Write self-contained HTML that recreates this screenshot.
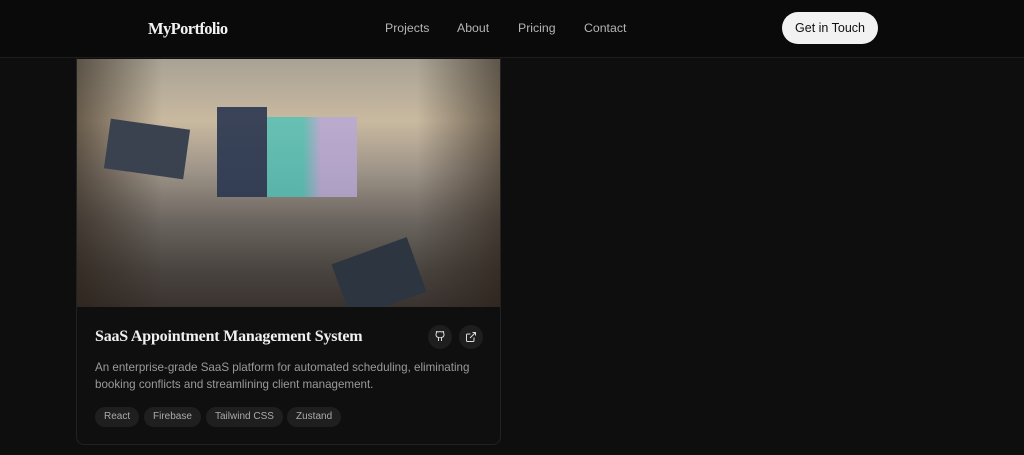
<!DOCTYPE html>
<html><head><style>
*{margin:0;padding:0;box-sizing:border-box}
body{width:1024px;height:455px;background:#0e0e0e;font-family:"Liberation Sans",sans-serif;overflow:hidden;position:relative}
.hdr{position:absolute;left:0;top:0;width:1024px;height:58px;background:#0a0a0a;border-bottom:1px solid #1c1c1c;z-index:5}
.logo{position:absolute;left:148px;top:19px;font-family:"Liberation Serif",serif;font-weight:bold;font-size:16.5px;color:#f2f2f2;letter-spacing:-0.6px}
.nav{position:absolute;top:21px;font-size:12.3px;color:#b5b5b5}
.btn{position:absolute;left:782px;top:12px;width:96px;height:32px;border-radius:16px;background:#f2f2f2;color:#111;font-size:12.5px;text-align:center;line-height:32px}
.card{position:absolute;left:76px;top:40px;width:425px;height:405px;border:1px solid #222;border-radius:8px;background:#0f0f0f;overflow:hidden}
.img{position:absolute;left:0;top:18px;width:425px;height:248px;overflow:hidden;background:
linear-gradient(90deg,rgba(40,30,20,.6) 0%,rgba(0,0,0,0) 20%,rgba(0,0,0,0) 80%,rgba(40,30,20,.6) 100%),
linear-gradient(180deg,#a8a294 0%,#c9b9a0 25%,#9e9488 45%,#6c6660 65%,#4a4440 85%,#3a3330 100%)}
.title{position:absolute;left:18px;top:287px;font-family:"Liberation Serif",serif;font-weight:bold;font-size:16px;color:#f0f0f0;letter-spacing:-0.2px}
.ib{position:absolute;top:284px;width:24px;height:24px;border-radius:12px;background:#1e1e1e}
.desc{position:absolute;left:18px;top:318px;width:380px;font-size:11.6px;line-height:17px;color:#9a9a9a}
.tag{position:absolute;top:366px;height:20px;border-radius:10px;background:#1f1f1f;color:#aaa;font-size:10px;line-height:20px;padding:0 9px}
</style></head><body>
<div class="card">
<div class="img">
<div style="position:absolute;left:140px;top:48px;width:50px;height:90px;background:#2a3650;opacity:.9"></div>
<div style="position:absolute;left:190px;top:58px;width:90px;height:80px;background:linear-gradient(90deg,#4fc1b7 40%,#b7a7d8 60%);opacity:.8"></div>
<div style="position:absolute;left:30px;top:65px;width:80px;height:50px;background:#3a4250;transform:rotate(8deg)"></div>
<div style="position:absolute;left:262px;top:190px;width:80px;height:58px;background:#2d3640;transform:rotate(-20deg)"></div>
</div>
<div class="title">SaaS Appointment Management System</div>
<div class="ib" style="left:351px"></div><div class="ib" style="left:382px"></div>
<svg style="position:absolute;left:357px;top:290px" width="12" height="12" viewBox="0 0 24 24" fill="none" stroke="#ddd" stroke-width="2"><path d="M9 20v-4a4 4 0 0 1 1-3c-3 0-6-1-6-6a5 5 0 0 1 1-3a4 4 0 0 1 0-3s1 0 3 1a12 12 0 0 1 8 0c2-1 3-1 3-1a4 4 0 0 1 0 3a5 5 0 0 1 1 3c0 5-3 6-6 6a4 4 0 0 1 1 3v4"/></svg>
<svg style="position:absolute;left:388px;top:290px" width="12" height="12" viewBox="0 0 24 24" fill="none" stroke="#ddd" stroke-width="2"><path d="M18 13v6a2 2 0 0 1-2 2H5a2 2 0 0 1-2-2V8a2 2 0 0 1 2-2h6M15 3h6v6M10 14L21 3"/></svg>
<div class="desc">An enterprise-grade SaaS platform for automated scheduling, eliminating booking conflicts and streamlining client management.</div>
<div class="tag" style="left:18px">React</div>
<div class="tag" style="left:67px">Firebase</div>
<div class="tag" style="left:129px">Tailwind CSS</div>
<div class="tag" style="left:210px">Zustand</div>
</div>
<div class="hdr">
<div class="logo">MyPortfolio</div>
<div class="nav" style="left:385px">Projects</div>
<div class="nav" style="left:457px">About</div>
<div class="nav" style="left:518px">Pricing</div>
<div class="nav" style="left:584px">Contact</div>
<div class="btn">Get in Touch</div>
</div>
</body></html>
